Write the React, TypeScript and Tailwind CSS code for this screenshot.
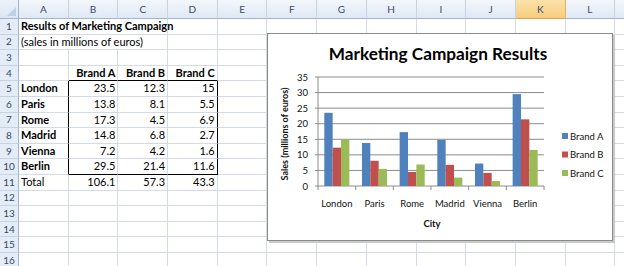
import React from 'react';

const COLS = ['A', 'B', 'C', 'D', 'E', 'F', 'G', 'H', 'I', 'J', 'K', 'L', 'M'];
const ROWS = Array.from({ length: 16 }, (_, i) => i + 1);

type Cell = { t: string; b?: boolean; right?: boolean; span?: number };

const sheet: Record<string, Cell> = {
  A1: { t: 'Results of Marketing Campaign', b: true, span: 3 },
  A2: { t: '(sales in millions of euros)', span: 3 },
  B4: { t: 'Brand A', b: true, right: true },
  C4: { t: 'Brand B', b: true, right: true },
  D4: { t: 'Brand C', b: true, right: true },
  A11: { t: 'Total' },
  B11: { t: '106.1', right: true },
  C11: { t: '57.3', right: true },
  D11: { t: '43.3', right: true },
};

const data: [string, number, number, number][] = [
  ['London', 23.5, 12.3, 15],
  ['Paris', 13.8, 8.1, 5.5],
  ['Rome', 17.3, 4.5, 6.9],
  ['Madrid', 14.8, 6.8, 2.7],
  ['Vienna', 7.2, 4.2, 1.6],
  ['Berlin', 29.5, 21.4, 11.6],
];

data.forEach(([city, a, b, c], i) => {
  const r = 5 + i;
  sheet['A' + r] = { t: city, b: true };
  sheet['B' + r] = { t: String(a), right: true };
  sheet['C' + r] = { t: String(b), right: true };
  sheet['D' + r] = { t: String(c), right: true };
});

const brandColors = ['#4f81bd', '#c0504d', '#9bbb59'];

function cellBorders(col: string, row: number) {
  // dark box around B5:D10
  const inBoxRows = row >= 5 && row <= 10;
  const rightDark = inBoxRows && (col === 'A' || col === 'D');
  const bottomDark = (row === 4 || row === 10) && ['B', 'C', 'D'].includes(col);
  return `${rightDark ? 'border-r-black' : 'border-r-[#d4dbe7]'} ${
    bottomDark ? 'border-b-black' : 'border-b-[#d4dbe7]'
  }`;
}

function Chart() {
  const x0 = 51;
  const plotW = 226;
  const yBase = 153;
  const scale = 109 / 35;
  const catW = plotW / 6;
  const barW = 8.35;
  const offset = (catW - 3 * barW) / 2;
  const grid = [0, 5, 10, 15, 20, 25, 30, 35];

  return (
    <div className="absolute left-[267px] top-[33px] w-[346px] h-[208px] bg-white border border-[#8a8a8a] shadow-[2px_2px_0_#c9c9c9]">
      <svg width={344} height={206} viewBox="1 1 344 206" className="font-[Lato,sans-serif] block">
        <text x={171} y={27} textAnchor="middle" fontSize={17.2} fontWeight={700} fill="#000">
          Marketing Campaign Results
        </text>

        {grid.map((v) => {
          const y = yBase - v * scale;
          return (
            <g key={v}>
              <line x1={x0} x2={x0 + plotW} y1={y} y2={y} stroke="#8c8c8c" strokeWidth={1} />
              <line x1={x0 - 3} x2={x0} y1={y} y2={y} stroke="#8c8c8c" strokeWidth={1} />
              <text x={41} y={y + 3.5} textAnchor="end" fontSize={9.5} fill="#111">
                {v}
              </text>
            </g>
          );
        })}
        <line x1={x0} x2={x0} y1={yBase - 35 * scale} y2={yBase} stroke="#8c8c8c" strokeWidth={1} />

        {data.map(([city, ...vals], i) => {
          const cx = x0 + i * catW;
          return (
            <g key={city}>
              {vals.map((v, j) => (
                <rect
                  key={j}
                  x={cx + offset + j * barW}
                  y={yBase - v * scale}
                  width={barW}
                  height={v * scale}
                  fill={brandColors[j]}
                />
              ))}
              <text x={cx + catW / 2} y={173.5} textAnchor="middle" fontSize={9.5} fill="#111">
                {city}
              </text>
            </g>
          );
        })}
        {Array.from({ length: 7 }, (_, i) => (
          <line
            key={i}
            x1={x0 + i * catW}
            x2={x0 + i * catW}
            y1={yBase}
            y2={yBase + 4}
            stroke="#8c8c8c"
            strokeWidth={1}
          />
        ))}

        <text x={165} y={194} textAnchor="middle" fontSize={9.5} fontWeight={700} fill="#111">
          City
        </text>
        <text
          transform="translate(21 101) rotate(-90)"
          textAnchor="middle"
          fontSize={9}
          fontWeight={700}
          fill="#111"
        >
          Sales (millions of euros)
        </text>

        {['Brand A', 'Brand B', 'Brand C'].map((name, j) => {
          const y = 103 + j * 18.5;
          return (
            <g key={name}>
              <rect x={295} y={y - 3} width={6} height={6} fill={brandColors[j]} />
              <text x={303} y={y + 3.5} fontSize={9.5} fill="#111">
                {name}
              </text>
            </g>
          );
        })}
      </svg>
    </div>
  );
}

export default function App() {
  return (
    <div className="relative w-[624px] h-[266px] overflow-hidden bg-white font-[Lato,sans-serif] text-[11px] text-black">
      <div className="grid w-max grid-cols-[19px_repeat(13,49.7px)] grid-rows-[19px_repeat(16,15.6px)]">
        {/* corner */}
        <div className="relative bg-gradient-to-b from-[#eef3fa] to-[#dce6f3] border-r border-b border-[#9eb6ce]">
          <div className="absolute right-[2px] bottom-[2px] w-0 h-0 border-l-[9px] border-l-transparent border-b-[9px] border-b-[#c2d0e2]" />
        </div>
        {COLS.map((c) =>
          c === 'K' ? (
            <div
              key={c}
              className="flex items-center justify-center bg-gradient-to-b from-[#fbe2ab] to-[#f6cc7d] border-r border-r-[#e8b35a] border-b border-b-[#e2a64a] text-[10px] text-[#3b4a63]"
            >
              {c}
            </div>
          ) : (
            <div
              key={c}
              className="flex items-center justify-center bg-gradient-to-b from-[#f3f7fc] to-[#dfe8f5] border-r border-r-[#c5d3e3] border-b border-b-[#9eb6ce] text-[10px] text-[#3b4a63]"
            >
              {c === 'M' ? '' : c}
            </div>
          )
        )}

        {ROWS.map((r) => {
          const out: React.ReactNode[] = [
            <div
              key={'h' + r}
              className="flex items-center justify-center bg-[#e4ecf7] border-r border-r-[#9eb6ce] border-b border-b-[#c5d3e3] text-[10px] text-[#3b4a63]"
            >
              {r}
            </div>,
          ];
          let skip = 0;
          COLS.forEach((c) => {
            if (skip > 0) {
              skip--;
              return;
            }
            const cell = sheet[c + r];
            const span = cell?.span ?? 1;
            skip = span - 1;
            out.push(
              <div
                key={c + r}
                className={`flex items-center overflow-visible whitespace-nowrap px-[2px] border-r border-b ${cellBorders(
                  span > 1 ? 'C' : c,
                  r
                )} ${span === 3 ? 'col-span-3' : ''} ${cell?.right ? 'justify-end' : 'justify-start'} ${
                  cell?.b ? 'font-bold' : 'font-normal'
                }`}
              >
                {cell?.t ?? ''}
              </div>
            );
          });
          return out;
        })}
      </div>
      <Chart />
    </div>
  );
}
